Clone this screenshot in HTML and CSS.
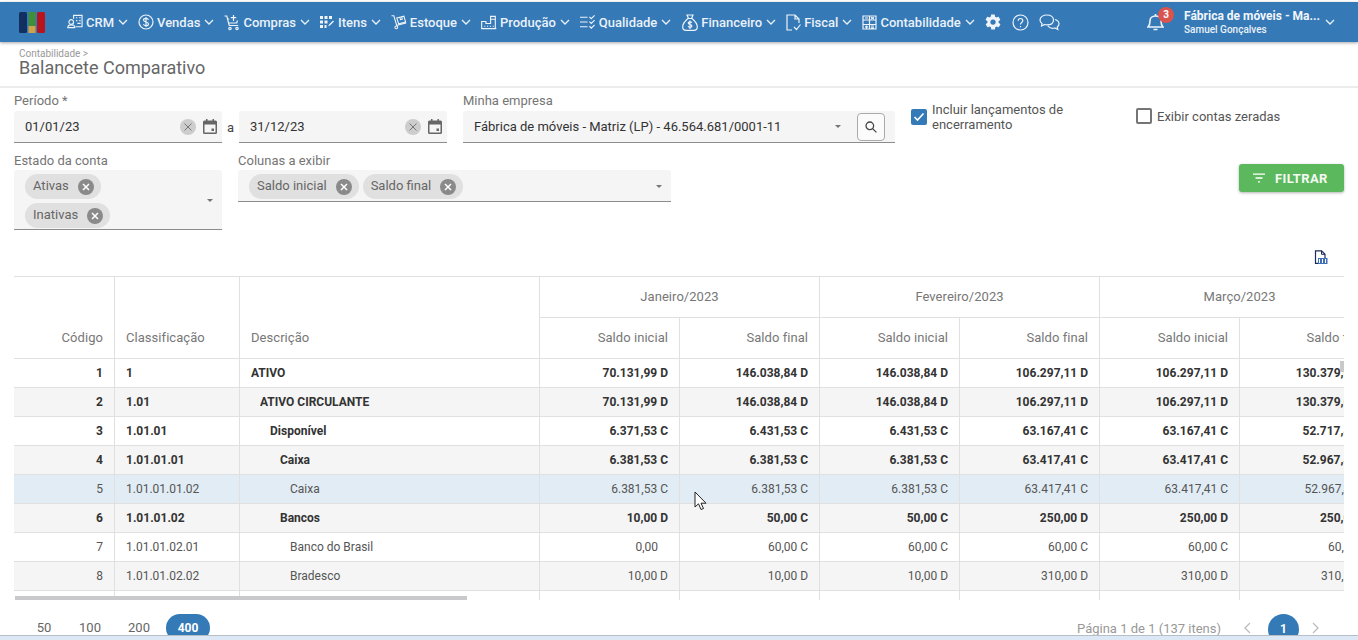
FILE: index.html
```html
<!DOCTYPE html>
<html lang="pt-BR">
<head>
<meta charset="utf-8">
<title>Balancete Comparativo</title>
<link rel="stylesheet" href="styles.css">
</head>
<body>
<div class="page">
<header class="topbar">
  <svg class="logo" width="27" height="21" viewBox="0 0 27 21"><rect x="0" y="0" width="8" height="21" rx="1.5" fill="#12305f"/><rect x="9.500" y="0" width="7" height="14" fill="#3f8f3a"/><rect x="9.500" y="14" width="7" height="7" fill="#d2a24a"/><rect x="18" y="0" width="8" height="21" rx="1.500" fill="#b9141c"/></svg>
  <nav class="menu">
    <a class="item">
      <svg class="ico" width="16" height="16" viewBox="0 0 17 17"><path d="M7 5V1.500h9v12H9M9.500 4h1.500M13 4h1.500M9.500 7h1.500M13 7h1.500M11 10h3.500"/><circle cx="4.500" cy="8.500" r="2.500"/><path d="M.8 14.500c0-2.500 1.500-3 3.700-3s3.700.5 3.700 3z"/></svg>
      <span>CRM</span><svg class="chev" width="10" height="6" viewBox="0 0 10 6"><path d="M1 1l4 4 4-4"/></svg></a>
    <a class="item">
      <svg class="ico" width="16" height="16" viewBox="0 0 16 16"><circle cx="8" cy="8" r="7"/><path d="M10.500 5.700C10 4.700 9 4.300 8 4.300c-1.400 0-2.500.7-2.500 1.800 0 2.500 5 1.300 5 3.800 0 1.100-1.100 1.800-2.500 1.800-1.100 0-2.100-.5-2.600-1.500M8 3v10"/></svg>
      <span>Vendas</span><svg class="chev" width="10" height="6" viewBox="0 0 10 6"><path d="M1 1l4 4 4-4"/></svg></a>
    <a class="item">
      <svg class="ico" width="16" height="17" viewBox="0 0 16 17"><path d="M.5 2h2.300l2.400 9.500h9M3.700 5h1.500M13.500 6.500l-.8 2.500H4.700M9.500 1v6M6.800 3.700h5.400"/><circle cx="6" cy="14.500" r="1.200"/><circle cx="13" cy="14.500" r="1.200"/></svg>
      <span>Compras</span><svg class="chev" width="10" height="6" viewBox="0 0 10 6"><path d="M1 1l4 4 4-4"/></svg></a>
    <a class="item">
      <svg class="ico fill" width="15" height="14" viewBox="0 0 15 14"><path d="M0 1h3v3H0zM4.500 1h3v3h-3zM9 1h3v3H9zM0 5.500h3v3H0zM4.500 5.500h3v3h-3zM0 10h3v3H0zM4.500 10h2v3h-2zM9 9.500l4-4 1 1-4 4-1.800.8z"/></svg>
      <span>Itens</span><svg class="chev" width="10" height="6" viewBox="0 0 10 6"><path d="M1 1l4 4 4-4"/></svg></a>
    <a class="item">
      <svg class="ico" width="16" height="16" viewBox="0 0 18 17"><path d="M.5 1.500h2.700l3.300 11.200M6 12.500l11-3"/><path d="M6.500 4l8-2 2 6.500-8 2zM10 3.300l.7 2.500 2-.5-.7-2.500"/><circle cx="6" cy="14.500" r="1.600"/></svg>
      <span>Estoque</span><svg class="chev" width="10" height="6" viewBox="0 0 10 6"><path d="M1 1l4 4 4-4"/></svg></a>
    <a class="item">
      <svg class="ico" width="16" height="15" viewBox="0 0 17 15"><path d="M.7 14V6.500h4.500v2h5V1h5v13zM.7 14h15.600M4 11v1M7 11v1M10 11v1M13 11v1M10 4h5.500"/></svg>
      <span>Produção</span><svg class="chev" width="10" height="6" viewBox="0 0 10 6"><path d="M1 1l4 4 4-4"/></svg></a>
    <a class="item">
      <svg class="ico" width="16" height="16" viewBox="0 0 17 16"><path d="M0 3h8M0 8h8M0 13h8M10 2.500l2 2 3.500-3.500M10 7.500l2 2 3.500-3.500M10 12.500l2 2 3.500-3.500"/></svg>
      <span>Qualidade</span><svg class="chev" width="10" height="6" viewBox="0 0 10 6"><path d="M1 1l4 4 4-4"/></svg></a>
    <a class="item">
      <svg class="ico" width="17" height="17" viewBox="0 0 17 17"><path d="M6 1h6l-1.500 3.500h-3zM7 4.500C4 7 1.700 10 1.700 13c0 2 1.500 3.300 3.500 3.300h7.600c2 0 3.500-1.300 3.500-3.300 0-3-2.300-6-5.300-8.500M11 8.500c-.5-.5-1.300-.7-2-.7-1 0-1.800.5-1.800 1.300 0 1.800 3.700 1 3.700 2.800 0 .8-.9 1.300-1.900 1.300-.8 0-1.500-.3-2-.9M9 6.500v8.500"/></svg>
      <span>Financeiro</span><svg class="chev" width="10" height="6" viewBox="0 0 10 6"><path d="M1 1l4 4 4-4"/></svg></a>
    <a class="item">
      <svg class="ico" width="15" height="17" viewBox="0 0 15 17"><path d="M6 16H1V1h8l4 4v4M9 1v4h4M8 13l2.500 2.500 4-5"/></svg>
      <span>Fiscal</span><svg class="chev" width="10" height="6" viewBox="0 0 10 6"><path d="M1 1l4 4 4-4"/></svg></a>
    <a class="item">
      <svg class="ico" width="15" height="15" viewBox="0 0 15 15"><path d="M1 1h13v13H1zM1 5h13M7.500 1v13M1 9.500h13M3 3h3M9 2.200l3 1.800M12 2.200L9 4M3 11.800h3M4.500 10.500v3M9 11h3M9 12.800h3"/></svg>
      <span>Contabilidade</span><svg class="chev" width="10" height="6" viewBox="0 0 10 6"><path d="M1 1l4 4 4-4"/></svg></a>
    <a class="tool">
      <svg width="18" height="18" viewBox="0 0 24 24"><path fill="#eef4fa" d="M19.400 13c.1-.3.100-.7.100-1s0-.7-.1-1l2.100-1.600c.2-.2.200-.4.100-.6l-2-3.500c-.1-.2-.4-.3-.6-.2l-2.500 1c-.5-.4-1.100-.7-1.700-1l-.4-2.600c0-.3-.2-.5-.5-.5h-4c-.3 0-.5.200-.5.500l-.4 2.600c-.6.300-1.200.6-1.700 1l-2.500-1c-.2-.1-.5 0-.6.200l-2 3.500c-.1.200-.1.400.1.600L4.600 11c-.1.300-.1.700-.1 1s0 .7.100 1l-2.100 1.600c-.2.200-.2.400-.1.600l2 3.500c.1.200.4.300.6.200l2.500-1c.5.400 1.100.7 1.700 1l.4 2.600c0 .3.200.5.500.5h4c.3 0 .5-.2.500-.5l.4-2.600c.6-.3 1.200-.6 1.700-1l2.500 1c.2.100.5 0 .6-.2l2-3.500c.1-.2.100-.4-.1-.6zM12 15.500A3.500 3.500 0 1 1 12 8.500a3.500 3.500 0 0 1 0 7z"/></svg>
    </a>
    <a class="tool">
      <svg class="ico" width="17" height="17" viewBox="0 0 17 17"><circle cx="8.500" cy="8.500" r="7.500"/><path d="M6.200 6.800c0-1.400 1-2.300 2.300-2.300s2.300.9 2.300 2.100c0 1.900-2.300 1.900-2.300 3.800M8.500 12v1.200"/></svg>
    </a>
    <a class="tool">
      <svg class="ico" width="21" height="17" viewBox="0 0 21 17"><path d="M8 1c-4 0-7 2-7 5 0 1.500.8 2.800 2 3.600L2.500 12l3.200-1.500c.8.200 1.500.3 2.300.3 4 0 6.500-2 6.500-4.900S12 1 8 1z"/><path d="M16 5.500c2.300.7 4 2.300 4 4.300 0 1.300-.7 2.500-1.800 3.300l.6 2.400-3-1.500c-2.800.7-5.800-.3-7-2.200"/></svg>
    </a>
  </nav>
  <div class="account">
    <div class="bell">
      <svg class="ico strong" width="17" height="18" viewBox="0 0 17 18"><path d="M1 14c1.500-1.500 2-3 2-6 0-3 2.200-5 5.500-5S14 5 14 8c0 3 .5 4.500 2 6zM8.500 1v2M6.500 16.500h4"/></svg>
      <span class="badge">3</span>
    </div>
    <div class="who">
      <strong>Fábrica de móveis - Ma...</strong>
      <small>Samuel Gonçalves</small>
    </div>
    <svg class="chev" width="10" height="6" viewBox="0 0 10 6"><path d="M1 1l4 4 4-4"/></svg>
  </div>
</header>

<section class="heading">
  <p class="crumb">Contabilidade &gt;</p>
  <h1>Balancete Comparativo</h1>
</section>

<section class="filters">
  <div class="row one">
    <div class="field w-period">
      <label>Período *</label>
      <div class="dates">
        <div class="box date"><span class="val">01/01/23</span><i class="clear"><svg width="8" height="8" viewBox="0 0 8 8"><path d="M.5.5l7 7M7.500.5l-7 7"/></svg></i><svg class="cal" width="14" height="15" viewBox="0 0 14 15"><path fill="#666" d="M3 0h1.500v1.500h5V0H11v1.500h1.500A1.500 1.500 0 0 1 14 3v10.500a1.500 1.500 0 0 1-1.500 1.500h-11A1.500 1.500 0 0 1 0 13.500V3a1.500 1.500 0 0 1 1.500-1.500H3zM1.500 5.500v8h11v-8zM8.500 9.500h2.500V12H8.500z"/></svg></div>
        <span class="sep">a</span>
        <div class="box date"><span class="val">31/12/23</span><i class="clear"><svg width="8" height="8" viewBox="0 0 8 8"><path d="M.5.5l7 7M7.500.5l-7 7"/></svg></i><svg class="cal" width="14" height="15" viewBox="0 0 14 15"><path fill="#666" d="M3 0h1.500v1.500h5V0H11v1.500h1.500A1.500 1.500 0 0 1 14 3v10.500a1.500 1.500 0 0 1-1.500 1.500h-11A1.500 1.500 0 0 1 0 13.500V3a1.500 1.500 0 0 1 1.500-1.500H3zM1.500 5.500v8h11v-8zM8.500 9.500h2.500V12H8.500z"/></svg></div>
      </div>
    </div>
    <div class="field w-company">
      <label>Minha empresa</label>
      <div class="box company"><span class="val">Fábrica de móveis - Matriz (LP) - 46.564.681/0001-11</span><b class="arrow"></b>
        <button class="search" type="button"><svg width="12" height="12" viewBox="0 0 12 12"><circle cx="4.800" cy="4.800" r="3.800"/><path d="M7.600 7.600l3.800 3.800"/></svg></button>
      </div>
    </div>
    <div class="check on">
      <i class="tick"><svg width="12" height="10" viewBox="0 0 12 10"><path d="M1.500 5l3 3 6-6.500"/></svg></i>
      <span>Incluir lançamentos de<br>encerramento</span>
    </div>
    <div class="check off">
      <i class="tick"></i>
      <span>Exibir contas zeradas</span>
    </div>
  </div>
  <div class="row two">
    <div class="field w-state">
      <label>Estado da conta</label>
      <div class="box chips tall">
        <div class="chip-list narrow">
          <span class="chip">Ativas<i class="x"><svg width="8" height="8" viewBox="0 0 8 8"><path d="M1 1l6 6M7 1L1 7"/></svg></i></span>
          <span class="chip">Inativas<i class="x"><svg width="8" height="8" viewBox="0 0 8 8"><path d="M1 1l6 6M7 1L1 7"/></svg></i></span>
        </div>
        <b class="arrow"></b>
      </div>
    </div>
    <div class="field w-cols">
      <label>Colunas a exibir</label>
      <div class="box chips">
        <div class="chip-list">
          <span class="chip">Saldo inicial<i class="x"><svg width="8" height="8" viewBox="0 0 8 8"><path d="M1 1l6 6M7 1L1 7"/></svg></i></span>
          <span class="chip">Saldo final<i class="x"><svg width="8" height="8" viewBox="0 0 8 8"><path d="M1 1l6 6M7 1L1 7"/></svg></i></span>
        </div>
        <b class="arrow"></b>
      </div>
    </div>
    <button class="apply" type="button"><svg width="12" height="10" viewBox="0 0 12 10"><path d="M0 1.200h12M2.500 5h7M5 8.800h2"/></svg>FILTRAR</button>
  </div>
</section>

<div class="export">
  <svg width="14" height="15" viewBox="0 0 14 15"><path fill="#fff" stroke="#1c2c55" stroke-width="1.200" d="M1.500.8h6l3.500 3.500v9H1.500z"/><path fill="none" stroke="#1c2c55" d="M7.500.8v3.500H11"/><rect x="4" y="8" width="9.500" height="6" fill="#3f6fb5"/><path stroke="#fff" d="M5.500 9v4M8.500 9v4M11.500 9v4"/></svg>
</div>

<section class="grid-wrap">
  <table class="grid">
    <colgroup><col class="c1"><col class="c2"><col class="c3"><col class="cv"><col class="cv"><col class="cv"><col class="cv"><col class="cv"><col class="cv"></colgroup>
    <thead>
      <tr class="h1"><th rowspan="2" class="r">Código</th><th rowspan="2" class="l">Classificação</th><th rowspan="2" class="l">Descrição</th><th colspan="2" class="m">Janeiro/2023</th><th colspan="2" class="m">Fevereiro/2023</th><th colspan="2" class="m">Março/2023</th></tr>
      <tr class="h2"><th class="r">Saldo inicial</th><th class="r">Saldo final</th><th class="r">Saldo inicial</th><th class="r">Saldo final</th><th class="r">Saldo inicial</th><th class="r">Saldo final</th></tr>
    </thead>
    <tbody>
      <tr class="b"><td class="r">1</td><td>1</td><td>ATIVO</td><td class="r">70.131,99 D</td><td class="r">146.038,84 D</td><td class="r">146.038,84 D</td><td class="r">106.297,11 D</td><td class="r">106.297,11 D</td><td class="r">130.379,65 D</td></tr>
      <tr class="b"><td class="r">2</td><td>1.01</td><td class="lv1">ATIVO CIRCULANTE</td><td class="r">70.131,99 D</td><td class="r">146.038,84 D</td><td class="r">146.038,84 D</td><td class="r">106.297,11 D</td><td class="r">106.297,11 D</td><td class="r">130.379,65 D</td></tr>
      <tr class="b"><td class="r">3</td><td>1.01.01</td><td class="lv2">Disponível</td><td class="r">6.371,53 C</td><td class="r">6.431,53 C</td><td class="r">6.431,53 C</td><td class="r">63.167,41 C</td><td class="r">63.167,41 C</td><td class="r">52.717,41 C</td></tr>
      <tr class="b"><td class="r">4</td><td>1.01.01.01</td><td class="lv3">Caixa</td><td class="r">6.381,53 C</td><td class="r">6.381,53 C</td><td class="r">6.381,53 C</td><td class="r">63.417,41 C</td><td class="r">63.417,41 C</td><td class="r">52.967,41 C</td></tr>
      <tr class="hover"><td class="r">5</td><td>1.01.01.01.02</td><td class="lv4">Caixa</td><td class="r">6.381,53 C</td><td class="r">6.381,53 C</td><td class="r">6.381,53 C</td><td class="r">63.417,41 C</td><td class="r">63.417,41 C</td><td class="r">52.967,41 C</td></tr>
      <tr class="b"><td class="r">6</td><td>1.01.01.02</td><td class="lv3">Bancos</td><td class="r">10,00 D</td><td class="r">50,00 C</td><td class="r">50,00 C</td><td class="r">250,00 D</td><td class="r">250,00 D</td><td class="r">250,00 D</td></tr>
      <tr><td class="r">7</td><td>1.01.01.02.01</td><td class="lv4">Banco do Brasil</td><td class="r pad">0,00</td><td class="r">60,00 C</td><td class="r">60,00 C</td><td class="r">60,00 C</td><td class="r">60,00 C</td><td class="r">60,00 C</td></tr>
      <tr><td class="r">8</td><td>1.01.01.02.02</td><td class="lv4">Bradesco</td><td class="r">10,00 D</td><td class="r">10,00 D</td><td class="r">10,00 D</td><td class="r">310,00 D</td><td class="r">310,00 D</td><td class="r">310,00 D</td></tr>
      <tr><td class="r">9</td><td>1.01.01.02.03</td><td class="lv4">Itaú</td><td class="r pad">0,00</td><td class="r pad">0,00</td><td class="r pad">0,00</td><td class="r pad">0,00</td><td class="r pad">0,00</td><td class="r pad">0,00</td></tr>
    </tbody>
  </table>
  <div class="hbar"></div>
  <div class="vbar"></div>
</section>

<footer class="pager">
  <div class="sizes"><a>50</a><a>100</a><a>200</a><a class="sel">400</a></div>
  <div class="pages">
    <span class="info">Página 1 de 1 (137 itens)</span>
    <svg class="nav" width="8" height="12" viewBox="0 0 8 12"><path d="M7 1L2 6l5 5"/></svg>
    <a class="sel">1</a>
    <svg class="nav" width="8" height="12" viewBox="0 0 8 12"><path d="M1 1l5 5-5 5"/></svg>
  </div>
</footer>

<div class="strip"></div>
<svg class="cursor" width="14" height="20" viewBox="0 0 14 20"><path fill="#fff" stroke="#222" d="M1 1v15l3.500-3.200L7 18.500l2.500-1-2.500-5.300h5z"/></svg>
</div>
</body>
</html>
```
FILE: styles.css
```css
* { box-sizing: border-box; }
html, body { margin: 0; height: 640px; overflow: hidden; background: #fff; }
body { font-family: Roboto, "Liberation Sans", sans-serif; color: #333; }
.page { position: relative; width: 1358px; height: 640px; overflow: hidden; }

/* top bar */
.topbar { display: flex; align-items: center; height: 40px; margin-top: 2px; padding-left: 19px; background: #3579b7; color: #eaf1f8; box-shadow: 0 1px 3px rgba(0,0,0,.35); position: relative; }
.logo { margin-right: 21px; flex: none; }
.menu { display: flex; align-items: center; gap: 10px; font-size: 13px; font-weight: 500; }
.item { display: flex; align-items: center; gap: 3px; white-space: nowrap; }
.item .chev { margin-left: 1px; }
.ico { fill: none; stroke: #eef4fa; stroke-width: 1.200; flex: none; }
.ico.fill { fill: #eef4fa; stroke: none; }
.ico.strong { stroke-width: 1.600; }
.chev { fill: none; stroke: #eaf1f8; stroke-width: 1.300; flex: none; }
.tool { display: flex; align-items: center; }
.item + .tool { margin-left: -1px; }
.account { display: flex; align-items: center; position: absolute; left: 1147px; top: 0; height: 40px; }
.bell { position: relative; width: 37px; display: flex; align-items: center; }
.badge { position: absolute; left: 11px; top: -6px; width: 16px; height: 16px; border-radius: 50%; background: #d9534f; color: #fff; font-size: 10px; font-weight: 700; line-height: 16px; text-align: center; }
.who { display: flex; flex-direction: column; width: 141px; }
.who strong { font-size: 12px; font-weight: 700; line-height: 15px; color: #f2f6fa; white-space: nowrap; }
.who small { font-size: 10px; font-weight: 500; line-height: 12px; }

/* heading */
.heading { height: 46px; border-bottom: 2px solid #ececec; padding: 6px 0 0 19px; }
.crumb { margin: 0; font-size: 10px; line-height: 11px; color: #999; }
h1 { margin: -2px 0 0; font-size: 18px; font-weight: 400; line-height: 21px; color: #666; }

/* filters */
.filters { padding: 5px 14px 0; }
.row { display: flex; align-items: flex-start; }
.row.two { margin-top: 10px; }
label { display: block; font-size: 13px; line-height: 15px; color: #757575; }
.field label { margin-bottom: 3px; }
.row.two .field label { margin-bottom: 2px; }
.box { display: flex; align-items: center; background: #f5f5f5; border-bottom: 1px solid #8c8c8c; border-radius: 3px 3px 0 0; height: 32px; font-size: 13px; color: #333; }
.w-period { width: 433px; }
.dates { display: flex; align-items: center; }
.date { width: 208px; padding: 0 5px 0 11px; }
.val { flex: 1; white-space: nowrap; }
.sep { width: 17px; text-align: center; font-size: 13px; color: #444; }
.clear { width: 16px; height: 16px; border-radius: 50%; background: #cdcdcd; display: flex; align-items: center; justify-content: center; margin-right: 7px; }
.clear svg { stroke: #777; stroke-width: 1; }
.w-company { width: 432px; margin-left: 16px; }
.company { padding: 0 10px 0 11px; }
.arrow { width: 0; height: 0; border: 3px solid transparent; border-top-color: #757575; border-bottom: 0; flex: none; }
.company .arrow { margin-right: 16px; }
.search { width: 28px; height: 28px; border: 1px solid #aaa; border-radius: 4px; background: #fbfbfb; display: flex; align-items: center; justify-content: center; padding: 0; }
.search svg { fill: none; stroke: #444; stroke-width: 1.300; }
.check { display: flex; align-items: center; font-size: 13px; line-height: 15px; color: #555; }
.check.on { margin: 9px 0 0 16px; width: 225px; }
.check.off { margin-top: 15px; }
.tick { display: flex; align-items: center; justify-content: center; width: 16px; height: 16px; border-radius: 2px; flex: none; margin-right: 5px; }
.on .tick { background: #337ab7; }
.on .tick svg { fill: none; stroke: #fff; stroke-width: 1.600; }
.off .tick { border: 2px solid #757575; }
.w-state { width: 208px; }
.w-cols { width: 433px; margin-left: 16px; }
.chips { height: 32px; padding: 4px 9px 0 11px; align-items: flex-start; justify-content: space-between; }
.chips.tall { height: 60px; }
.chips .arrow { align-self: center; margin-top: -3px; }
.chip-list { display: flex; flex-wrap: wrap; gap: 4px; }
.chip-list.narrow { width: 150px; }
.chip { display: inline-flex; align-items: center; height: 25px; padding: 0 7px 2px 8px; border-radius: 13px; background: #e0e0e0; color: #666; font-size: 13px; }
.x { display: flex; align-items: center; justify-content: center; width: 16px; height: 16px; margin: 2px 0 0 9px; border-radius: 50%; background: #8a8a8a; }
.x svg { stroke: #fff; stroke-width: 1.500; }
.apply { display: flex; align-items: center; gap: 10px; margin: 11px 0 0 auto; width: 105px; height: 28px; border: 0; border-radius: 3px; background: #5cb85c; color: #f4faf4; font: 700 13px Roboto, sans-serif; letter-spacing: .4px; box-shadow: 0 1px 3px rgba(0,0,0,.3); padding: 0 0 0 14px; }
.apply svg { fill: none; stroke: #fff; stroke-width: 1.300; }

/* export */
.export { display: flex; justify-content: flex-end; height: 46px; padding: 20px 30px 0 0; }

/* table */
.grid-wrap { position: relative; width: 1330px; height: 324px; margin-left: 14px; overflow: hidden; }
.grid { border-collapse: separate; border-spacing: 0; table-layout: fixed; width: 1366px; border-top: 1px solid #e0e0e0; font-size: 12px; }
.c1 { width: 101px; } .c2 { width: 125px; } .c3 { width: 300px; } .cv { width: 140px; }
th, td { border-right: 1px solid #e0e0e0; border-bottom: 1px solid #e0e0e0; padding: 0 11px; white-space: nowrap; overflow: hidden; }
th { font-size: 13px; font-weight: 400; color: #777; letter-spacing: .05px; }
.h1 th { height: 41px; padding-bottom: 2px; }
.h2 th { height: 41px; padding-bottom: 2px; }
.h1 th[rowspan] { vertical-align: bottom; padding-bottom: 13px; }
.h1 .m { text-align: center; }
.l { text-align: left; }
.r { text-align: right; }
td { height: 29px; color: #555; }
tbody tr:nth-child(even) td { background: #f5f5f5; }
tbody tr.hover td { background: #e1ecf4; }
tr.b td { font-weight: 700; color: #333; }
.lv1 { padding-left: 20px; } .lv2 { padding-left: 30px; } .lv3 { padding-left: 40px; } .lv4 { padding-left: 50px; }
td.pad { padding-right: 21px; }
.hbar { position: absolute; left: 1px; bottom: 0; width: 452px; height: 4px; background: #c9c9cc; }
.vbar { position: absolute; right: 0; top: 85px; width: 4px; height: 11px; background: #c9c9cc; }

/* footer */
.pager { display: flex; justify-content: space-between; align-items: flex-start; padding: 14px 14px 0 25px; font-size: 13px; color: #666; }
.sizes { display: flex; align-items: center; }
.sizes a { display: block; height: 28px; line-height: 28px; width: 44px; text-align: center; }
.sizes a:first-child { width: 38px; }
.sizes a:nth-child(2) { width: 54px; }
.sizes a.sel { width: 44px; margin-left: 5px; }
.sel { background: #337ab7; color: #fff; font-weight: 700; border-radius: 14px; font-size: 12px; }
.pages { display: flex; align-items: center; height: 28px; padding-right: 24px; }
.info { color: #999; margin-right: 22px; }
.nav { fill: none; stroke: #bbb; stroke-width: 1.300; }
.pages .sel { width: 31px; height: 31px; line-height: 31px; border-radius: 50%; text-align: center; margin: 2px 13px 0 17px; }

/* overlays */
.strip { position: absolute; left: 0; right: 0; bottom: 0; height: 5px; background: #dce8f5; border-top: 1px solid #b7bec6; }
.cursor { position: absolute; left: 694px; top: 491px; }
```
